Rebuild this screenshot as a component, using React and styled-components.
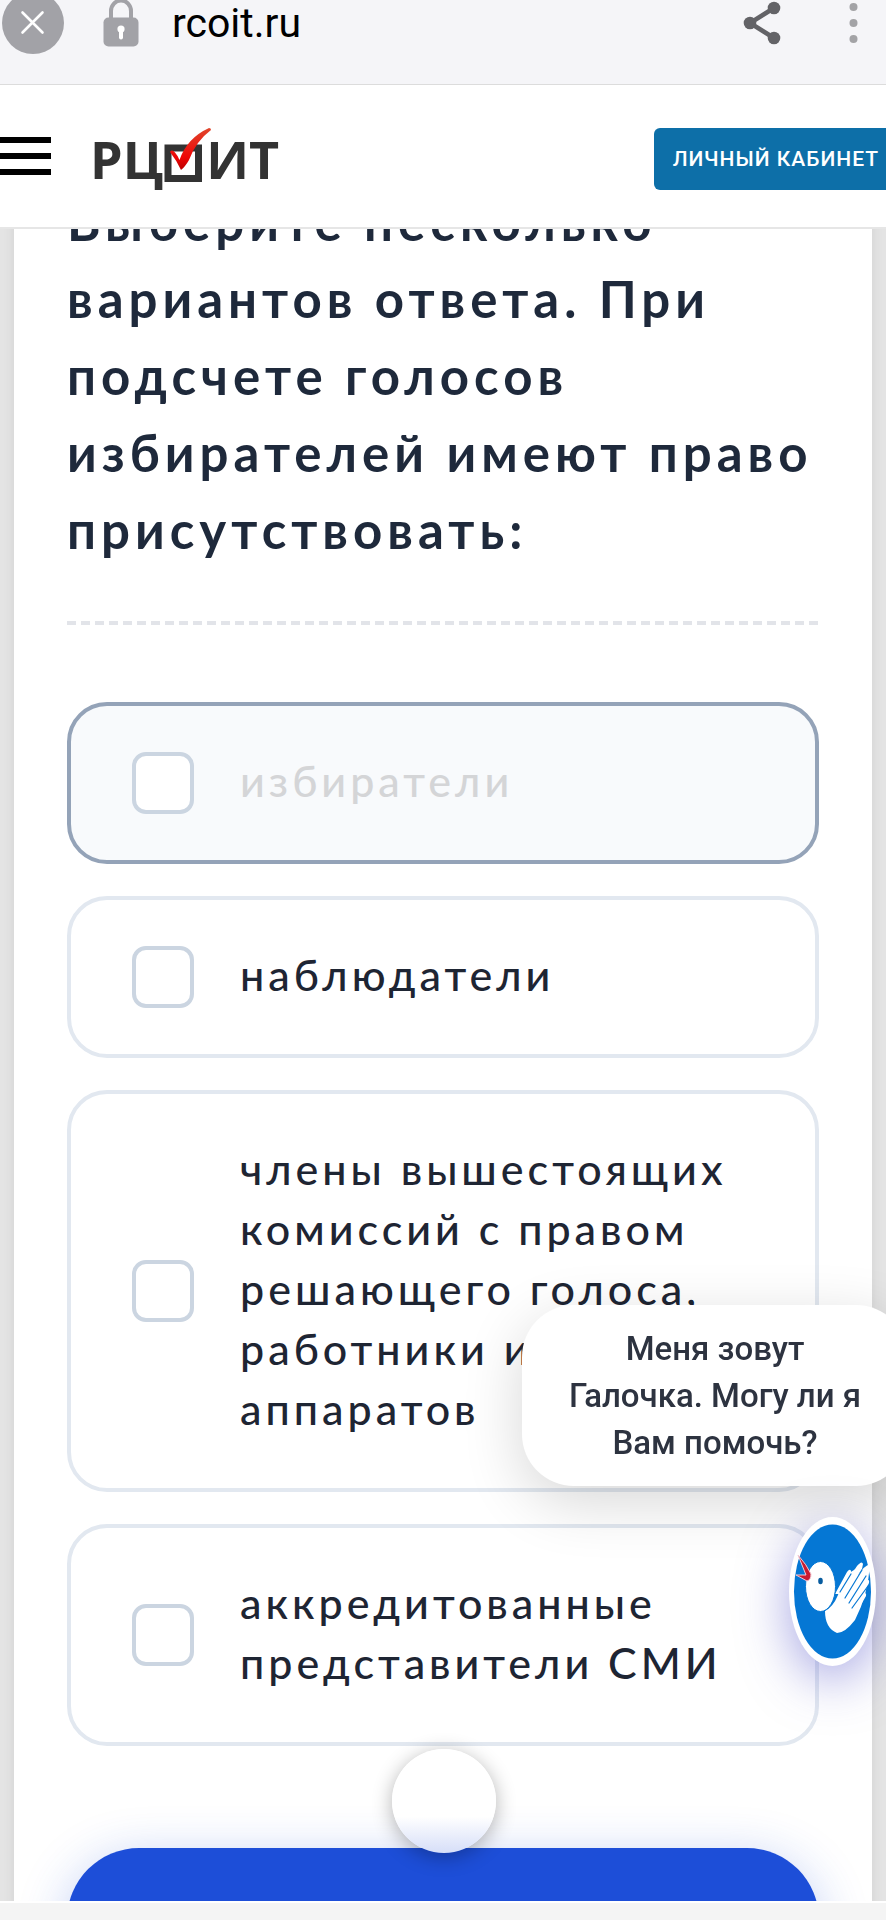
import styled, { createGlobalStyle, css } from "styled-components";

const EstiloGlobal = createGlobalStyle`
  * {
    box-sizing: border-box;
  }

  body {
    margin: 0;
    background-color: #ffffff;
    overflow: hidden;
  }
`;

const Page = styled.div`
  display: flex;
  flex-direction: column;
  height: 100vh;
  overflow: hidden;
  font-family: Lato, "Open Sans", sans-serif;
`;

const BrowserBar = styled.div`
  display: flex;
  align-items: center;
  flex-shrink: 0;
  height: 85px;
  padding: 0 28px 38px 2px;
  background-color: #f5f5f8;
  border-bottom: 1px solid #dcdcdc;
`;

const IconButton = styled.button`
  display: flex;
  padding: 0;
  border: none;
  background-color: transparent;
`;

const Address = styled.div`
  display: flex;
  flex-grow: 1;
  align-items: center;
  gap: 33px;
  margin-left: 39px;
  font-family: Roboto, sans-serif;
  font-size: 41px;
  line-height: 48px;
  color: #000000;
`;

const BarActions = styled.div`
  display: flex;
  align-items: center;
  gap: 68px;
`;

const Header = styled.header`
  display: flex;
  align-items: center;
  flex-shrink: 0;
  height: 144px;
  border-bottom: 2px solid #e6e6e6;
  background-color: #ffffff;
`;

const MenuButton = styled(IconButton)`
  flex-direction: column;
  gap: 10px;
  width: 51px;
`;

const MenuLine = styled.span`
  width: 100%;
  height: 6px;
  background-color: #000000;
`;

const Logo = styled.a`
  display: flex;
  align-items: center;
  flex-grow: 1;
  margin-left: 39px;
  padding-top: 6px;
  font-family: "Open Sans", sans-serif;
  font-size: 52px;
  font-weight: 700;
  line-height: 60px;
  color: #333333;
  text-decoration: none;
`;

const LoginButton = styled.button`
  flex-shrink: 0;
  height: 62px;
  margin: 6px -12px 0 0;
  padding: 0 19px;
  border: none;
  border-radius: 6px;
  background-color: #0d6fa8;
  font-family: Roboto, sans-serif;
  font-size: 21px;
  font-weight: 500;
  letter-spacing: 1px;
  text-transform: uppercase;
  color: #ffffff;
`;

const Main = styled.main`
  flex: 1;
  min-height: 0;
  overflow: hidden;
  padding: 0 14px;
  background-color: #e4e4e4;
`;

const Panel = styled.section`
  min-height: 100%;
  padding: 0 53px;
  background-color: #ffffff;
  box-shadow: 0 0 12px rgba(0, 0, 0, 0.08);
`;

/* the first line is partly scrolled under the header */
const Question = styled.h1`
  margin: -46px 0 0;
  padding-bottom: 53px;
  font-size: 51px;
  font-weight: 700;
  line-height: 77px;
  letter-spacing: 5px;
  color: #1e293b;
`;

const Divider = styled.hr`
  height: 4px;
  margin: 0 0 77px;
  border: none;
  background: repeating-linear-gradient(
    to right,
    #e2e4e9 0 9px,
    transparent 9px 14px
  );
`;

const Answers = styled.div`
  display: flex;
  flex-direction: column;
  gap: 32px;
`;

const Answer = styled.label`
  display: flex;
  align-items: center;
  gap: 46px;
  padding: 45px 61px;
  border: 4px solid #e2e8f0;
  border-radius: 40px;
  color: #1e2533;

  ${({ $muted }) =>
    $muted &&
    css`
      border-color: #94a3b8;
      background-color: #f8fafc;
      color: #d4d5d7;
    `}
`;

const AnswerText = styled.span`
  padding-bottom: 4px;
  font-size: 43px;
  font-weight: 500;
  line-height: 60px;
  letter-spacing: 4px;
`;

const Checkbox = styled.input`
  appearance: none;
  flex-shrink: 0;
  width: 62px;
  height: 62px;
  margin: 0;
  border: 4px solid #cbd5e1;
  border-radius: 14px;
  background-color: #ffffff;

  &:checked {
    background-color: #1d4ed8;
  }
`;

const SubmitButton = styled.button`
  display: block;
  width: 100%;
  height: 150px;
  margin-top: 102px;
  border: none;
  border-radius: 72px;
  background-color: #1d4ed8;
  box-shadow: 0 10px 50px rgba(29, 78, 216, 0.28);
`;

const BottomStrip = styled.footer`
  flex-shrink: 0;
  height: 19px;
  border-top: 2px solid #ffffff;
  background-color: #f4f4f4;
`;

const Spinner = styled.div`
  position: fixed;
  bottom: 67px;
  left: calc(50% - 51px);
  width: 104px;
  height: 104px;
  border-radius: 50%;
  background: linear-gradient(#ffffff 65%, #d6def8);
  box-shadow: 0 4px 20px rgba(0, 0, 0, 0.3);
`;

const Bubble = styled.div`
  position: fixed;
  right: -22px;
  bottom: 434px;
  width: 386px;
  padding: 20px 40px;
  border-radius: 52px;
  background-color: #ffffff;
  box-shadow: 0 16px 60px rgba(0, 0, 0, 0.16);
  font-family: Roboto, sans-serif;
  font-size: 33px;
  font-weight: 500;
  line-height: 47px;
  text-align: center;
  color: #2d3340;
`;

const Assistant = styled.button`
  position: fixed;
  right: 10px;
  bottom: 254px;
  display: flex;
  width: 87px;
  height: 149px;
  padding: 0;
  border: none;
  border-radius: 50%;
  background-color: #ffffff;
  box-shadow: 0 14px 50px rgba(80, 80, 200, 0.5);
`;

const CloseIcon = () => (
  <svg width="62" height="62" viewBox="0 0 62 62">
    <circle cx="31" cy="31" r="31" fill="#a2a2a7" />
    <path
      d="M20.5 20.5 40.5 40.5M40.5 20.5 20.5 40.5"
      stroke="#ffffff"
      strokeWidth="2.6"
      strokeLinecap="round"
    />
  </svg>
);

const LockIcon = () => (
  <svg width="36" height="48" viewBox="0 0 36 48">
    <path d="M8 20V12a10 10.5 0 0 1 20 0V20" fill="none" stroke="#a2a2a7" strokeWidth="4" />
    <rect x="0.5" y="18.5" width="35" height="29" rx="5" fill="#a2a2a7" />
    <circle cx="18" cy="30" r="3.6" fill="#ffffff" />
    <path d="M18 31V38.5" stroke="#ffffff" strokeWidth="4" strokeLinecap="round" />
  </svg>
);

const ShareIcon = () => (
  <svg width="38" height="44" viewBox="0 0 38 44">
    <path d="M31 7 7 22 31 37" fill="none" stroke="#636367" strokeWidth="4.5" />
    <circle cx="31" cy="7" r="6.3" fill="#636367" />
    <circle cx="7" cy="22" r="6.3" fill="#636367" />
    <circle cx="31" cy="37" r="6.3" fill="#636367" />
  </svg>
);

const DotsIcon = () => (
  <svg width="9" height="42" viewBox="0 0 9 42">
    <circle cx="4.5" cy="5" r="4" fill="#a3a3a6" />
    <circle cx="4.5" cy="21" r="4" fill="#a3a3a6" />
    <circle cx="4.5" cy="37" r="4" fill="#a3a3a6" />
  </svg>
);

const TickBox = () => (
  <svg width="43" height="56" viewBox="0 0 43 56" overflow="visible">
    <defs>
      <linearGradient id="tick" x1="0" y1="1" x2="0" y2="0">
        <stop offset="0" stopColor="#b80000" />
        <stop offset="0.3" stopColor="#ee0505" />
        <stop offset="1" stopColor="#e0462c" />
      </linearGradient>
    </defs>
    <rect x="5" y="17" width="30.5" height="30.5" fill="#ffffff" stroke="#333333" strokeWidth="7" />
    <path
      d="M7 21Q9 18 12 21.500Q15 25 16.500 29Q24 7 46 -3Q48 -3 48 -1Q33 10 26 29Q22 36 18 39Q14 30 7 21Z"
      fill="url(#tick)"
    />
  </svg>
);

const DoveIcon = () => (
  <svg width="87" height="149" viewBox="0 0 87 149">
    <ellipse cx="43.5" cy="74.5" rx="38.5" ry="67" fill="#0577d4" />
    <path
      d="M36 94Q44 90 49 78Q52 67 57 58L65 53Q67 51 69 54Q70 56 69 58Q75 49 81 47Q79 78 66 103Q56 116 48 116Q36 111 36 94Z"
      fill="#ffffff"
    />
    <path
      d="M46 77 58 55Q61 51 62 54V59L50 77M50 76 68 49Q73 43 74 47L73 52 54 80M55 80 77 51Q81 47 80 52L79 58 60 87M61 87 75 66Q81 60 80 66L77 72 65 92M63 92 72 80Q78 73 77 79L65 100Z"
      fill="#ffffff"
    />
    <path
      d="M51 75 62 57M56 81 73 53M60 86 77 59M63 91 79 69"
      stroke="#0577d4"
      strokeWidth="1.2"
      strokeLinecap="round"
    />
    <ellipse cx="31.5" cy="69.5" rx="15" ry="25" fill="#ffffff" stroke="#0577d4" strokeWidth="1" />
    <ellipse cx="31.5" cy="64" rx="2.3" ry="3.2" fill="#075c9f" />
    <path
      d="M9 38Q18 48 22 57Q22 63 18 64L7 58 17 58Z"
      fill="#c71c31"
      stroke="#f3c9d3"
      strokeWidth="1"
      strokeLinejoin="round"
    />
  </svg>
);

const answers = [
  { id: "voters", text: "избиратели", muted: true },
  { id: "observers", text: "наблюдатели" },
  {
    id: "members",
    text: "члены вышестоящих комиссий с правом решающего голоса, работники их аппаратов",
  },
  { id: "press", text: "аккредитованные представители СМИ" },
];

const App = () => {
  return (
    <>
      <EstiloGlobal />
      <Page>
        <BrowserBar>
          <IconButton aria-label="Закрыть">
            <CloseIcon />
          </IconButton>
          <Address>
            <LockIcon />
            <span>rcoit.ru</span>
          </Address>
          <BarActions>
            <IconButton aria-label="Поделиться">
              <ShareIcon />
            </IconButton>
            <IconButton aria-label="Ещё">
              <DotsIcon />
            </IconButton>
          </BarActions>
        </BrowserBar>
        <Header>
          <MenuButton aria-label="Меню">
            <MenuLine />
            <MenuLine />
            <MenuLine />
          </MenuButton>
          <Logo href="#">
            РЦ
            <TickBox />
            ИТ
          </Logo>
          <LoginButton>Личный кабинет</LoginButton>
        </Header>
        <Main>
          <Panel>
            <Question>
              Выберите несколько вариантов ответа. При подсчете голосов
              избирателей имеют право присутствовать:
            </Question>
            <Divider />
            <Answers>
              {answers.map(({ id, text, muted }) => (
                <Answer key={id} htmlFor={id} $muted={muted}>
                  <Checkbox type="checkbox" id={id} />
                  <AnswerText>{text}</AnswerText>
                </Answer>
              ))}
            </Answers>
            <SubmitButton aria-label="Ответить" />
          </Panel>
        </Main>
        <BottomStrip />
      </Page>
      <Spinner />
      <Bubble>Меня зовут Галочка. Могу ли я Вам помочь?</Bubble>
      <Assistant aria-label="Галочка">
        <DoveIcon />
      </Assistant>
    </>
  );
};

export default App;
